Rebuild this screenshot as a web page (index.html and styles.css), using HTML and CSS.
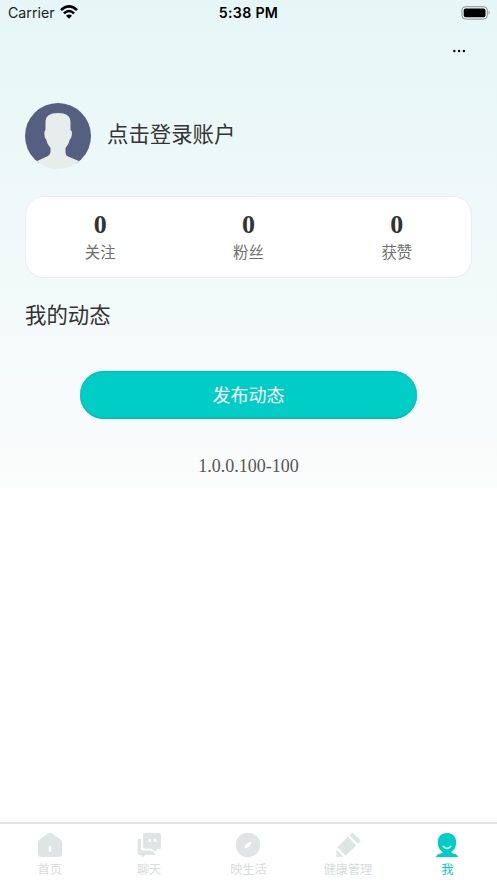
FILE: index.html
```html
<!DOCTYPE html>
<html lang="zh-CN">
<head>
<meta charset="utf-8">
<title>我</title>
<link rel="stylesheet" href="styles.css">
</head>
<body>
<div class="app">
  <main class="profile">
    <header class="status">
      <div class="carrier"><span class="carrier-name">Carrier</span>
        <svg class="wifi" viewBox="0 0 18 14" width="18" height="14"><g fill="none" stroke="#000" stroke-width="2.5"><path d="M1 5.200Q9-2.400 17 5.200"/><path d="M3.900 8.300Q9 3.600 14.100 8.300"/></g><path d="M6 10.700Q9 8.300 12 10.700L9 13.700Z"/></svg>
      </div>
      <time class="clock">5:38 PM</time>
      <svg class="battery" viewBox="0 0 30 14" width="30" height="14"><rect x=".9" y=".7" width="25.400" height="12.400" rx="3.600" fill="none" stroke="#899190"/><rect x="2.700" y="2.500" width="21.800" height="8.800" rx="2"/><path d="M27.600 4.600Q29.600 6.800 27.600 9Z" fill="#899190"/></svg>
    </header>
    <div class="toolbar"><svg viewBox="0 0 14 4" width="14" height="4"><circle cx="2.300" cy="2" r="1.200"/><circle cx="7.100" cy="2" r="1.200"/><circle cx="11.900" cy="2" r="1.200"/></svg></div>
    <section class="user">
      <svg class="avatar" viewBox="0 0 66 66" width="66" height="66">
        <defs><clipPath id="round"><circle cx="33" cy="33" r="33"/></clipPath></defs>
        <g clip-path="url(#round)"><path fill="#556080" d="M0 0H66V60H0Z"/><path fill="#e7eced" d="M33 10C41 10 45.500 13 45.500 19V27Q47.500 28 46.800 32Q46.500 35 45 36Q44 41 40.500 45V50Q40.500 52 43 53.500L55 58.500V66H11V58.500L23 53Q25.500 51.500 25.500 49V45Q22 41 21 36Q19.500 35 19.500 32Q19 28 20.500 27V19C20.500 13 25 10 33 10Z"/></g>
      </svg>
      <span class="login">点击登录账户</span>
    </section>
    <section class="stats">
      <div class="stat"><b>0</b><span>关注</span></div>
      <div class="stat"><b>0</b><span>粉丝</span></div>
      <div class="stat"><b>0</b><span>获赞</span></div>
    </section>
    <h2 class="heading">我的动态</h2>
    <button class="publish">发布动态</button>
    <p class="version">1.0.0.100-100</p>
  </main>
  <nav class="tabs">
    <a class="tab"><svg viewBox="0 0 26 26"><path fill-rule="evenodd" d="M10.500 1.700Q13-.2 15.500 1.700L23.500 7.500Q25 8.600 25 10.500V21.500Q25 25 21.500 25H4.500Q1 25 1 21.500V10.500Q1 8.600 2.500 7.500ZM11.700 14.300V19.800H14.300V14.300Z"/></svg><span>首页</span></a>
    <a class="tab"><svg viewBox="0 0 26 26"><path d="M4 7H4.500V17Q4.500 19 6.500 19H15.500L19 22.500H9.500L6 25V22.500H4Q2 22.500 2 20.500V9Q2 7 4 7Z" stroke="#e0e4e5" stroke-linejoin="round"/><path fill-rule="evenodd" d="M9 1H23.500Q25 1 25 2.500V15.500Q25 17 23.500 17H21.500L19.500 19.300L15.500 16.700H9Q7 16.700 7 15V3Q7 1 9 1ZM12.500 7.300V10H15V7.300ZM17.800 7.300V10H20.300V7.300Z"/></svg><span>聊天</span></a>
    <a class="tab"><svg viewBox="0 0 26 26"><circle cx="13" cy="13" r="12.200"/><path fill="#fff" d="M16.500 9.500Q15.800 15.500 9.500 16.500Q10.200 10.500 16.500 9.500Z"/></svg><span>映生活</span></a>
    <a class="tab"><svg viewBox="0 0 26 26"><path d="M14.500 3.300L16.500 1.300Q17.500 .3 18.500 1.300L25 7.800Q25.800 8.800 25 9.700L23 11.700ZM12.800 4.800L21.300 13.300L10.700 23.700L2.300 15.300ZM1.300 17.500L8.300 24.500L1.300 25Z"/></svg><span>健康管理</span></a>
    <a class="tab active"><svg viewBox="0 0 26 26"><path d="M13 .9C19 .9 22.200 5 22.200 10.500C22.200 15 20 18.500 17 20.200Q18 21 20 21.700Q23.800 22.500 24 25H2Q2.200 22.500 6 21.700Q8 21 9 20.200C6 18.500 3.800 15 3.800 10.500C3.800 5 7 .9 13 .9Z"/><path d="M9.200 14.200Q13 18.600 16.800 14.200" fill="none" stroke="#fff" stroke-width="1.500" stroke-linecap="round"/></svg><span>我</span></a>
  </nav>
</div>
</body>
</html>
```
FILE: styles.css
```css
* { box-sizing: border-box; }
body { margin: 0; background: #fff; color: #333; font-family: "Liberation Serif", "Noto Sans CJK SC", serif; }
.app { height: 883px; display: flex; flex-direction: column; justify-content: space-between; overflow: hidden; }
.profile { height: 488px; padding: 0 25px; display: flex; flex-direction: column; background: linear-gradient(#e6f6f6, #fbfcfc); }
.status { height: 26px; margin: 0 -19px 0 -17px; display: grid; grid-template-columns: 1fr auto 1fr; align-items: center; font-family: Inter, sans-serif; color: #000; }
.carrier { display: flex; align-items: center; gap: 5px; font-size: 14.2px; color: #222; }
.carrier-name { margin-top: -1px; }
.wifi { margin-top: -2px; }
.clock { font-size: 14.2px; font-weight: 600; letter-spacing: .3px; margin: -2px 2px 0 0; }
.battery { justify-self: end; margin-top: -1px; }
.toolbar { height: 77px; display: flex; justify-content: flex-end; padding: 23px 6px 0 0; }
.user { height: 66px; display: flex; align-items: center; gap: 16px; }
.login { font-size: 21.4px; line-height: 32px; margin-top: -2px; }
.stats { height: 82px; margin-top: 27px; padding-top: 13px; display: grid; grid-template-columns: repeat(3, 1fr); background: #fff; border: 1px solid #eceeee; border-radius: 19px; }
.stat { display: flex; flex-direction: column; align-items: center; }
.stat b { font-size: 26px; line-height: 30px; }
.stat span { font-size: 15.4px; line-height: 23px; margin-top: 1px; color: #707070; }
.heading { margin: 22px 0 0; font-size: 21.4px; line-height: 32px; font-weight: 400; }
.publish { align-self: center; width: 337px; height: 48px; margin-top: 39px; padding: 0 0 1px; border: 0; border-radius: 24px; background: #00cdc5; color: #fff; font: 18px/27px "Noto Sans CJK SC", sans-serif; box-shadow: inset 0 1px 1px #00bdb5, inset 0 -1.5px 1px #00bdb5; }
.version { margin: 36px 0 0; text-align: center; font-size: 18px; line-height: 22px; color: #555; }
.tabs { height: 61px; padding-top: 8px; display: grid; grid-template-columns: repeat(5, 1fr); border-top: 2px solid #e0e1e1; background: #fff; }
.tab { display: flex; flex-direction: column; align-items: center; color: #d8dcdc; font: 12.2px/18px "Noto Sans CJK SC", sans-serif; }
.tab svg { width: 26px; height: 26px; fill: #e0e4e5; }
.tab span { margin-top: 2px; }
.tab.active { color: #00cdc5; }
.tab.active svg { fill: #00cdc5; }
```
